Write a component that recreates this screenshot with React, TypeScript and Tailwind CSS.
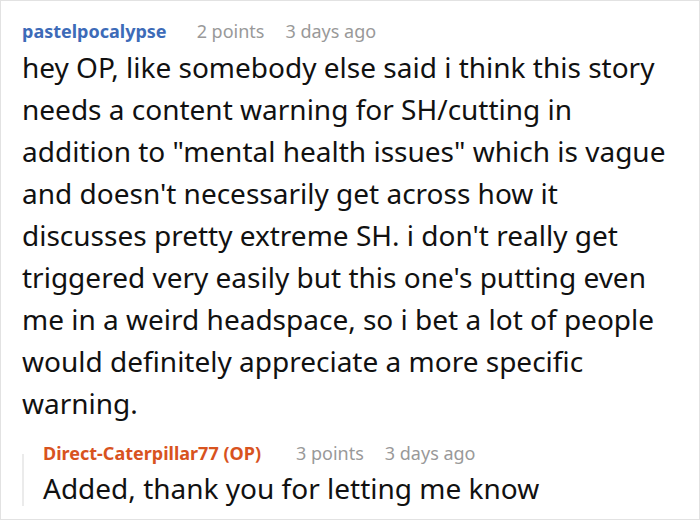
import React from 'react'

const FONT = { fontFamily: '"Noto Sans", "Open Sans", sans-serif' }

function Meta({ author, authorClass, points, age, gapClass }: { author: string; authorClass: string; points: string; age: string; gapClass: string }) {
  return (
    <div className="flex items-baseline text-[18px] leading-[26px]">
      <span className={`font-bold ${authorClass}`}>{author}</span>
      <span className={`${gapClass} text-[#999999]`}>{points}</span>
      <span className="ml-[21px] text-[#999999]">{age}</span>
    </div>
  )
}

export default function App() {
  return (
    <div style={FONT} className="w-[700px] h-[520px] bg-white border border-[#e2e2e2] overflow-hidden">
      <div className="pl-[21px] pr-[16px] pt-[17px]">
        <Meta author="pastelpocalypse" authorClass="text-[#3d6bb8]" points="2 points" age="3 days ago" gapClass="ml-[30px]" />
        <p className="mt-[2px] text-[28px] leading-[42px] text-[#111111]">
          hey OP, like somebody else said i think this story needs a content warning for SH/cutting in addition to "mental
          health issues" which is vague and doesn't necessarily get across how it discusses pretty extreme SH. i don't
          really get triggered very easily but this one's putting even me in a weird headspace, so i bet a lot of people
          would definitely appreciate a more specific warning.
        </p>
        <div className="mt-[16px] flex">
          <div className="w-[2px] bg-[#ebebeb] mt-[14px] mb-[2px]" />
          <div className="pl-[19px]">
            <Meta author="Direct-Caterpillar77 (OP)" authorClass="text-[#d8531e]" points="3 points" age="3 days ago" gapClass="ml-[35px]" />
            <p className="mt-[2px] text-[28px] leading-[40px] text-[#111111]">Added, thank you for letting me know</p>
          </div>
        </div>
      </div>
    </div>
  )
}
